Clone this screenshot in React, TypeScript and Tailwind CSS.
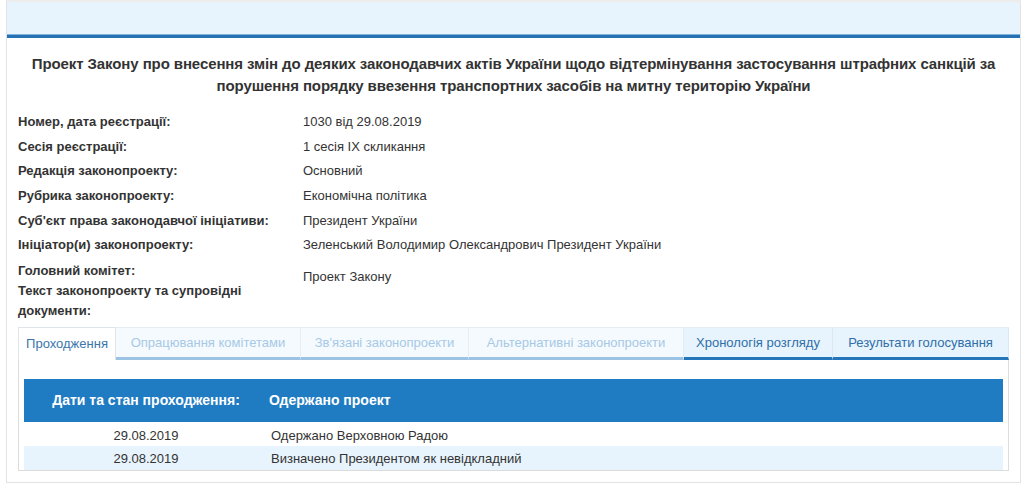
import React from "react";

const rows: [string, string][] = [
  ["Номер, дата реєстрації:", "1030 від 29.08.2019"],
  ["Сесія реєстрації:", "1 сесія IX скликання"],
  ["Редакція законопроекту:", "Основний"],
  ["Рубрика законопроекту:", "Економічна політика"],
  ["Суб'єкт права законодавчої ініціативи:", "Президент України"],
  ["Ініціатор(и) законопроекту:", "Зеленський Володимир Олександрович Президент України"],
];

type Tab = { label: string; w: string; kind: "active" | "faded" | "dark" };
const tabs: Tab[] = [
  { label: "Проходження", w: "w-[98px]", kind: "active" },
  { label: "Опрацювання комітетами", w: "w-[185px]", kind: "faded" },
  { label: "Зв'язані законопроекти", w: "w-[168px]", kind: "faded" },
  { label: "Альтернативні законопроекти", w: "w-[215px]", kind: "faded" },
  { label: "Хронологія розгляду", w: "w-[149px]", kind: "dark" },
  { label: "Результати голосування", w: "w-[176px]", kind: "dark" },
];

export default function App() {
  return (
    <div className="w-[1024px] h-[499px] bg-white overflow-hidden font-['Liberation_Sans',Arial,sans-serif] text-[#333]">
      <div className="ml-[6px] w-[1015px] border-t-2 border-t-[#ececec] border-x border-x-[#e3e3e3] border-b border-b-[#e3e3e3]">
        <div className="h-[32px] bg-[#e8f4fd]" />
        <div className="h-px bg-[#7fb2dc]" />
        <div className="h-[3px] bg-[#2571b3]" />
        <h1 className="pt-[15px] px-[6px] text-center text-[15px] leading-[22px] font-bold text-[#333] tracking-[-0.1px]">
          Проект Закону про внесення змін до деяких законодавчих актів України щодо відтермінування застосування штрафних санкцій за порушення порядку ввезення транспортних засобів на митну територію України
        </h1>
        <div className="mt-[13px] pl-[11px] pr-[11px]">
          {rows.map(([l, v]) => (
            <div key={l} className="flex py-[2.3px] leading-[20px] text-[13px]">
              <div className="w-[285px] font-bold">{l}</div>
              <div>{v}</div>
            </div>
          ))}
          <div className="flex text-[13px] leading-[20px]">
            <div className="w-[285px] pt-[3px] font-bold">
              <div>Головний комітет:</div>
              <div className="w-[260px]">Текст законопроекту та супровідні документи:</div>
            </div>
            <div className="pt-[9px]">Проект Закону</div>
          </div>

          <div className="mt-[6px] w-[991px]">
            <div className="flex h-[33px] text-[13px]">
              {tabs.map((t) => (
                <div
                  key={t.label}
                  className={
                    t.w +
                    " flex items-center justify-center pt-[1px] " +
                    (t.kind === "active"
                      ? "bg-white border-t border-x border-[#dfe4e8] text-[#3a75ac]"
                      : t.kind === "faded"
                      ? "bg-[#f5fafe] border-t border-r border-t-[#e6eef5] border-r-[#e2edf6] border-b-[3px] border-b-[#9cc3e4] text-[#a7c9e6]"
                      : "bg-[#e8f4fd] border-t border-r border-t-[#e6eef5] border-r-[#d9e8f4] border-b-[3px] border-b-[#2575bb] text-[#2f6ea8]")
                  }
                >
                  {t.label}
                </div>
              ))}
            </div>
            <div className="border-x border-b border-[#dcdcdc] px-[5px] pt-[19px]">
              <div className="flex items-center h-[43px] bg-[#207cc2] text-white text-[14px] font-bold">
                <div className="w-[244px] text-center">Дати та стан проходження:</div>
                <div className="pl-[1px]">Одержано проект</div>
              </div>
              <div className="flex items-center h-[24.5px] pt-[4px] text-[13px]">
                <div className="w-[244px] text-center">29.08.2019</div>
                <div className="pl-[3px]">Одержано Верховною Радою</div>
              </div>
              <div className="flex items-center h-[23.5px] pt-[2px] text-[13px] bg-[#e8f4fd]">
                <div className="w-[244px] text-center">29.08.2019</div>
                <div className="pl-[3px]">Визначено Президентом як невідкладний</div>
              </div>
            </div>
          </div>
          <div className="h-[11px]" />
        </div>
      </div>
    </div>
  );
}
